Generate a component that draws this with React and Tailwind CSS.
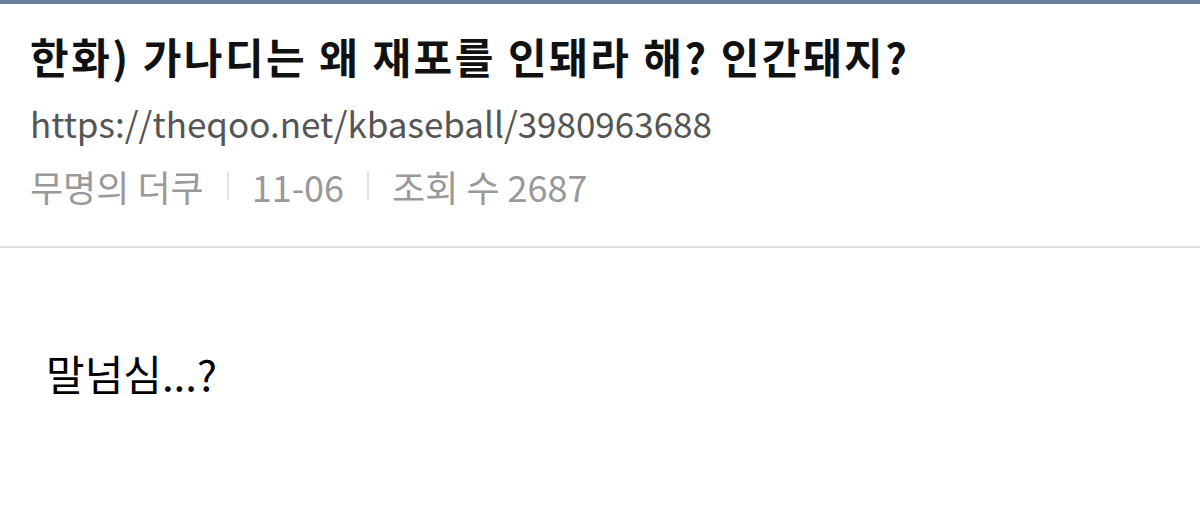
import React from 'react';

const meta = ['무명의 더쿠', '11-06', '조회 수 2687'];

const App = () => {
  return (
    <div
      className="w-[1200px] h-[505px] bg-white overflow-hidden"
      style={{ fontFamily: '"Noto Sans CJK KR", "Noto Sans", sans-serif' }}
    >
      <div className="h-[4px] bg-[#6a7f9e]" />
      <div className="px-[30px] pt-[24px] pb-[38px] border-b-2 border-[#e0e0e0]">
        <h1 className="text-[42px] leading-[56px] font-bold text-[#111] tracking-[2.5px]">
          한화) 가나디는 왜 재포를 인돼라 해? 인간돼지?
        </h1>
        <div className="text-[35px] leading-[44px] text-[#555] mt-[17px]">
          https://theqoo.net/kbaseball/3980963688
        </div>
        <div className="flex items-center text-[36px] leading-[44px] text-[#999] mt-[19px]">
          {meta.map((item, i) => (
            <React.Fragment key={item}>
              {i > 0 && <span className="mx-[23px] w-[2px] h-[28px] bg-[#e2e2e2]" />}
              <span>{item}</span>
            </React.Fragment>
          ))}
        </div>
      </div>
      <div className="px-[46px] pt-[97px] text-[42px] leading-[56px] text-black">
        말넘심...?
      </div>
    </div>
  );
};

export default App;
